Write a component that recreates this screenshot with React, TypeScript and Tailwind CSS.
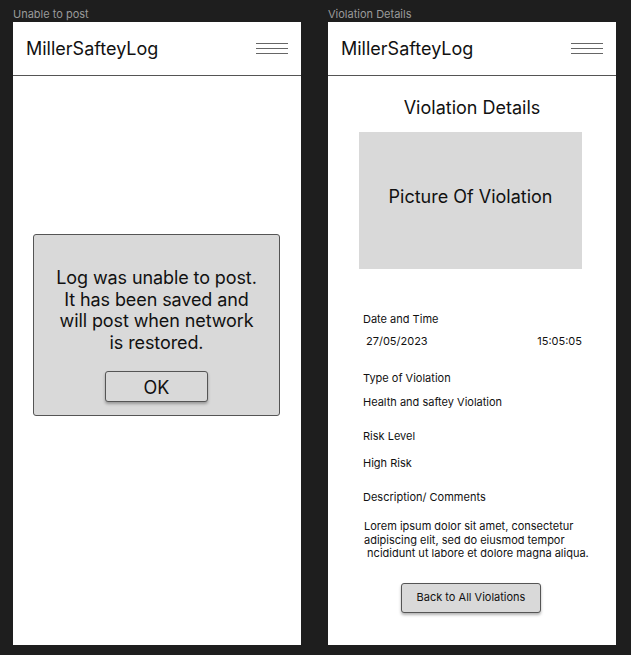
import React from "react";

const font = { fontFamily: "Inter, 'Noto Sans', sans-serif" };

function Header() {
  return (
    <div className="h-[54px] flex items-center justify-between pl-[13px] pr-[13px] border-b border-[#555555] bg-white">
      <span className="text-[18px] leading-[24px] text-[#111111]">MillerSafteyLog</span>
      <svg width="32" height="14" viewBox="0 0 32 14" className="mt-[1px]">
        <line x1="0" y1="1.5" x2="32" y2="1.5" stroke="#666" strokeWidth="1" />
        <line x1="0" y1="6.5" x2="32" y2="6.5" stroke="#666" strokeWidth="1" />
        <line x1="0" y1="11.5" x2="32" y2="11.5" stroke="#666" strokeWidth="1" />
      </svg>
    </div>
  );
}

export default function App() {
  return (
    <div style={font} className="w-[631px] h-[655px] bg-[#1e1e1e] flex gap-[27px] pl-[13px] overflow-hidden">
      {/* Frame 1 */}
      <div className="flex flex-col w-[288px]">
        <div className="h-[22px] pt-[7px] text-[11px] leading-[14px] text-[#9a9a9a]">Unable to post</div>
        <div className="h-[623px] bg-white flex flex-col">
          <Header />
          <div className="pt-[158px] pl-[20px]">
            <div className="w-[247px] h-[182px] bg-[#d9d9d9] border border-[#555555] rounded-[3px] flex flex-col items-center pt-[32px]">
              <p className="text-[18px] leading-[21.7px] text-[#111111] text-center tracking-[-0.1px]">
                Log was unable to post.<br />
                It has been saved and<br />
                will post when network<br />
                is restored.
              </p>
              <div className="mt-[17px] w-[103px] h-[31px] bg-[#d9d9d9] border border-[#555555] rounded-[3px] shadow-[0_2px_3px_rgba(0,0,0,0.3)] flex items-center justify-center pt-[2px] text-[18px] text-[#111111]">
                OK
              </div>
            </div>
          </div>
        </div>
      </div>

      {/* Frame 2 */}
      <div className="flex flex-col w-[288px]">
        <div className="h-[22px] pt-[7px] text-[11px] leading-[14px] text-[#9a9a9a]">Violation Details</div>
        <div className="h-[623px] bg-white flex flex-col">
          <Header />
          <div className="pt-[21px] text-center text-[18px] leading-[22px] text-[#111111]">Violation Details</div>
          <div className="mt-[13px] ml-[31px] w-[223px] h-[137px] bg-[#d9d9d9] flex items-center justify-center pb-[9px] text-[18px] text-[#111111]">
            Picture Of Violation
          </div>
          <div className="pl-[35px] pr-[34px] text-[11px] leading-[14px] text-[#111111]">
            <div className="mt-[43px]">Date and Time</div>
            <div className="mt-[8px] flex justify-between pl-[3px]">
              <span>27/05/2023</span>
              <span>15:05:05</span>
            </div>
            <div className="mt-[23px]">Type of Violation</div>
            <div className="mt-[10px]">Health and saftey Violation</div>
            <div className="mt-[20px]">Risk Level</div>
            <div className="mt-[13px]">High Risk</div>
            <div className="mt-[20px]">Description/ Comments</div>
            <div className="mt-[16px] leading-[13.5px] pl-[1px] whitespace-nowrap">
              Lorem ipsum dolor sit amet, consectetur<br />
              adipiscing elit, sed do eiusmod tempor<br />
              &nbsp;ncididunt ut labore et dolore magna aliqua.
            </div>
          </div>
          <div className="mt-[22px] ml-[73px] w-[140px] h-[30px] bg-[#d9d9d9] border border-[#555555] rounded-[3px] shadow-[0_2px_3px_rgba(0,0,0,0.3)] flex items-center justify-center text-[11px] text-[#111111]">
            Back to All Violations
          </div>
        </div>
      </div>
    </div>
  );
}
